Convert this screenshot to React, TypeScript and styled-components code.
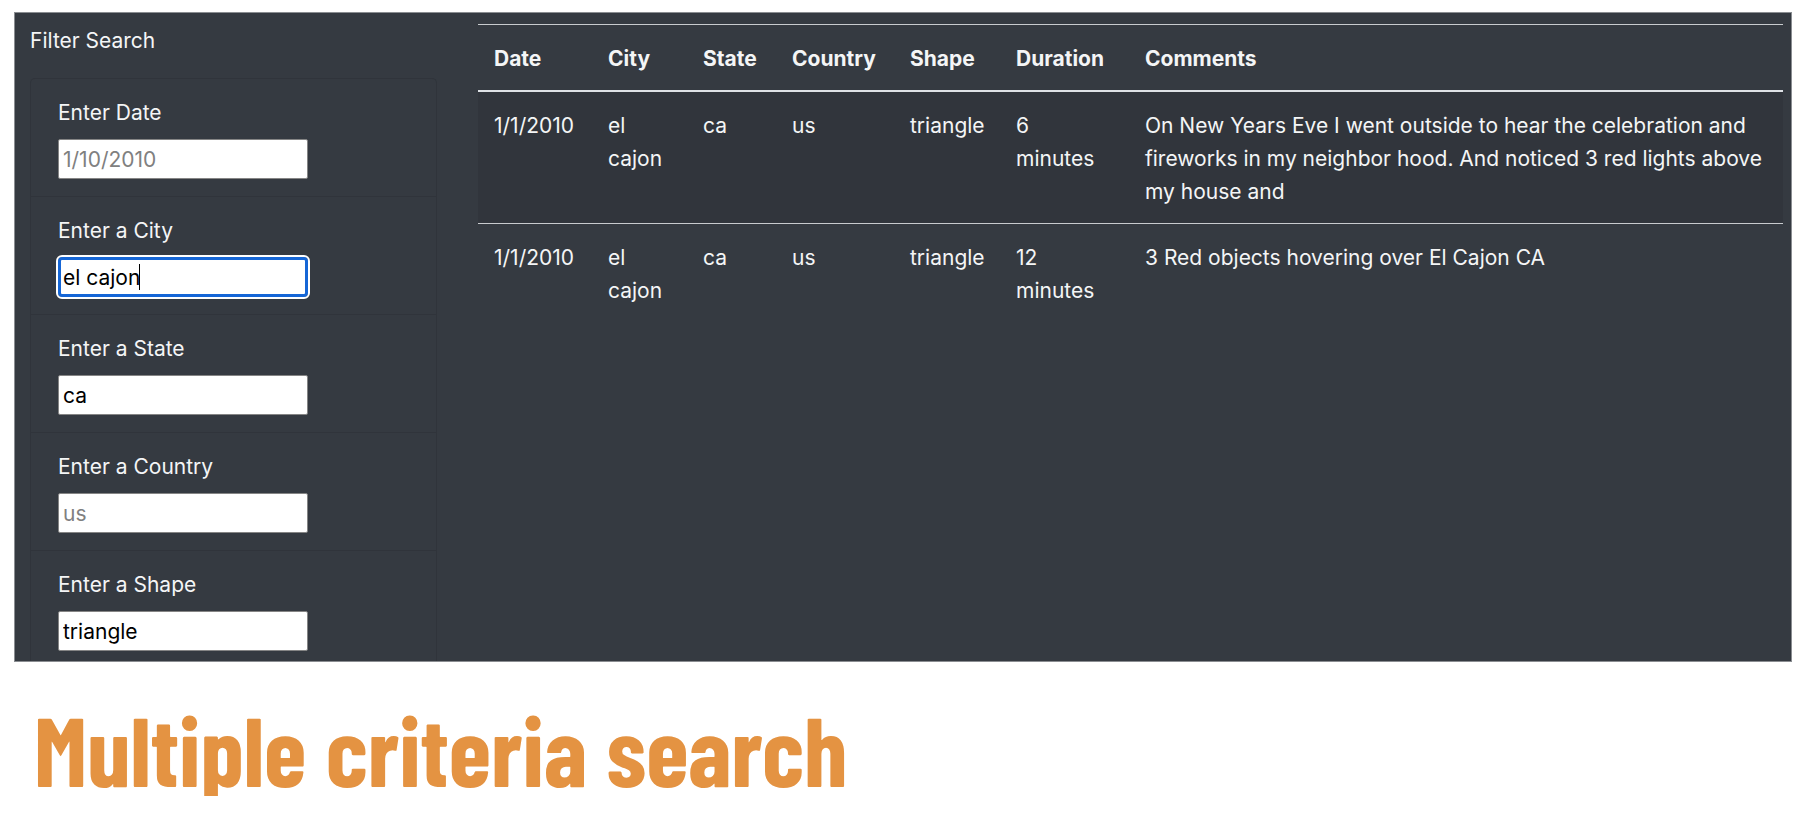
import React from "react";
import styled, { createGlobalStyle } from "styled-components";

const GlobalStyle = createGlobalStyle`
  *, *::before, *::after { box-sizing: border-box; }
  body {
    margin: 0;
    background: #fff;
    font-family: Inter, Roboto, "Liberation Sans", sans-serif;
    font-size: 21px;
    line-height: 33px;
  }
`;

const Page = styled.main`
  padding: 12px 12px 0 14px;
`;

const Panel = styled.section`
  display: grid;
  grid-template-columns: minmax(0, 1fr) minmax(0, 3fr);
  border: 1px solid #8a8d91;
  background: #353a41;
  color: #f4f5f6;
`;

const Sidebar = styled.form`
  padding: 11px 22px 0 15px;
`;

const SidebarTitle = styled.p`
  margin: 0 0 21px;
`;

const FilterList = styled.ul`
  margin: 0;
  padding: 0;
  list-style: none;
  border: 1px solid #30343b;
  border-bottom: 0;
  border-radius: 5px 5px 0 0;
`;

const FilterItem = styled.li`
  padding: 17px 27px;

  & + & {
    border-top: 1px solid #30343b;
  }

  &:last-child {
    padding-bottom: 10px;
  }
`;

const FilterLabel = styled.label`
  display: block;
  margin-bottom: 10px;
`;

const InputWrap = styled.div`
  position: relative;
  width: 250px;
  max-width: 100%;
`;

const FilterInput = styled.input`
  display: block;
  width: 100%;
  height: 40px;
  padding: 2px 4px;
  border: 1px solid #858585;
  border-radius: 2px;
  background: #fff;
  color: #000;
  font: inherit;
  caret-color: transparent;

  &::placeholder {
    color: #808080;
    opacity: 1;
  }

  &:focus {
    outline: 2px solid #fff;
    outline-offset: 0;
    border: 3px solid #1566d6;
    padding: 0 2px;
    border-radius: 4px;
  }
`;

const Caret = styled.span`
  position: absolute;
  top: 7px;
  left: 81px;
  width: 1px;
  height: 26px;
  background: #000;
`;

const Results = styled.div`
  padding: 11px 8px 0 19px;
`;

const Table = styled.table`
  width: 100%;
  table-layout: fixed;
  border-collapse: separate;
  border-spacing: 0;
`;

const Col = styled.col<{ $width?: number }>`
  width: ${({ $width }) => ($width ? `${$width}px` : "auto")};
`;

const HeadCell = styled.th`
  padding: 17px 16px 15px;
  border-top: 1px solid #c8cbce;
  border-bottom: 2px solid #dee2e6;
  text-align: left;
  font-weight: 700;
`;

const Row = styled.tr`
  &:nth-child(odd) {
    background: #31353c;
  }

  & + & > td {
    border-top: 1px solid #c8cbce;
  }
`;

const Cell = styled.td<{ $narrow?: boolean }>`
  padding: 17px ${({ $narrow }) => ($narrow ? "24px" : "16px")} 15px 16px;
  vertical-align: top;
`;

const Headline = styled.h1`
  margin: 38px 0 0;
  padding-left: 20px;
  color: #e49342;
  font-family: "Barlow Condensed", "Roboto Condensed", "Liberation Sans Narrow", sans-serif;
  font-size: 97px;
  line-height: 96px;
  font-weight: 700;
`;

const filters = [
  { id: "date", label: "Enter Date", placeholder: "1/10/2010", value: "" },
  { id: "city", label: "Enter a City", placeholder: "roswell", value: "el cajon" },
  { id: "state", label: "Enter a State", placeholder: "ca", value: "ca" },
  { id: "country", label: "Enter a Country", placeholder: "us", value: "" },
  { id: "shape", label: "Enter a Shape", placeholder: "circle", value: "triangle" },
];

const columns = [
  { name: "Date", width: 114 },
  { name: "City", width: 95 },
  { name: "State", width: 89 },
  { name: "Country", width: 118 },
  { name: "Shape", width: 106 },
  { name: "Duration", width: 129, narrow: true },
  { name: "Comments" },
];

const sightings = [
  [
    "1/1/2010", "el cajon", "ca", "us", "triangle", "6 minutes",
    "On New Years Eve I went outside to hear the celebration and fireworks in my neighbor hood. And noticed 3 red lights above my house and",
  ],
  [
    "1/1/2010", "el cajon", "ca", "us", "triangle", "12 minutes",
    "3 Red objects hovering over El Cajon CA",
  ],
];

export default function App() {
  return (
    <>
      <GlobalStyle />
      <Page>
        <Panel>
          <Sidebar>
            <SidebarTitle>Filter Search</SidebarTitle>
            <FilterList>
              {filters.map((f) => (
                <FilterItem key={f.id}>
                  <FilterLabel htmlFor={f.id}>{f.label}</FilterLabel>
                  <InputWrap>
                    <FilterInput
                      id={f.id}
                      type="text"
                      placeholder={f.placeholder}
                      defaultValue={f.value}
                      autoFocus={f.id === "city"}
                    />
                    {f.id === "city" && <Caret />}
                  </InputWrap>
                </FilterItem>
              ))}
            </FilterList>
          </Sidebar>
          <Results>
            <Table>
              <colgroup>
                {columns.map((c) => (
                  <Col key={c.name} $width={c.width} />
                ))}
              </colgroup>
              <thead>
                <tr>
                  {columns.map((c) => (
                    <HeadCell key={c.name} scope="col">{c.name}</HeadCell>
                  ))}
                </tr>
              </thead>
              <tbody>
                {sightings.map((cells, i) => (
                  <Row key={i}>
                    {cells.map((text, j) => (
                      <Cell key={j} $narrow={columns[j].narrow}>{text}</Cell>
                    ))}
                  </Row>
                ))}
              </tbody>
            </Table>
          </Results>
        </Panel>
        <Headline>Multiple criteria search</Headline>
      </Page>
    </>
  );
}
